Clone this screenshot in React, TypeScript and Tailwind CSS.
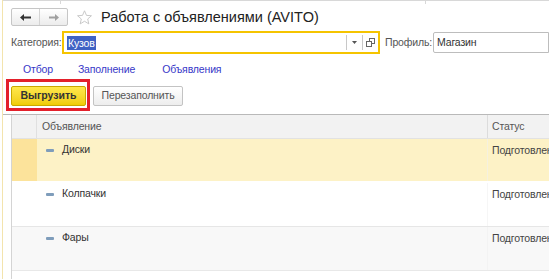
import React from "react";

const F = { fontFamily: '"Liberation Sans", Arial, sans-serif' };

function Dash() {
  return <span className="inline-block w-[8px] h-[3px] bg-[#7f9dbb] rounded-[1px] mr-[8px] mt-[1px]" />;
}

function Row({ name, bg, lead, border }: { name: string; bg: string; lead: string; border: string }) {
  return (
    <div className={`flex h-[44px] ${bg} ${border}`}>
      <div className={`w-[25px] shrink-0 ${lead}`} />
      <div className="flex-1 flex items-start pt-[4px] pl-[9px] text-[10.5px] tracking-[-0.15px] text-[#333]">
        <div className="flex items-center h-[14px]">
          <Dash />
          <span>{name}</span>
        </div>
      </div>
      <div className="w-[62px] shrink-0 border-l border-[#f0f0f0]/60 pl-[4px] pt-[4px] text-[10.5px] tracking-[-0.15px] text-[#444] whitespace-nowrap overflow-hidden">
        <div className="h-[14px] leading-[14px]">Подготовлен</div>
      </div>
    </div>
  );
}

export default function App() {
  return (
    <div className="w-[549px] h-[279px] overflow-hidden bg-white flex" style={F}>
      <div className="w-[2px] shrink-0" />
      <div className="w-[1px] shrink-0 bg-[#f3e4ad]" />
      <div className="flex-1 flex flex-col min-w-0">
        {/* top strip */}
        <div className="h-[4px] border-t border-[#d8d8d8] flex">
          <div className="w-[57px]" />
          <div className="w-[1px] h-[3px] bg-[#d8d8d8]" />
          <div className="w-[364px]" />
          <div className="w-[1px] h-[3px] bg-[#d8d8d8]" />
        </div>
        {/* title row */}
        <div className="flex items-center h-[18px] mt-[4px] pl-[8px]">
          <div className="flex h-[18px] w-[57px] border border-[#c6c6c6] rounded-[2px] bg-gradient-to-b from-white to-[#ececec]">
            <div className="flex-1 flex items-center justify-center border-r border-[#d4d4d4]">
              <svg width="13" height="9" viewBox="0 0 13 9">
                <path d="M1 4.5 L5 1 V3.5 H12 V5.5 H5 V8 Z" fill="#333" />
              </svg>
            </div>
            <div className="flex-1 flex items-center justify-center">
              <svg width="12" height="9" viewBox="0 0 12 9">
                <path d="M11 4.5 L7 1 V3.5 H1 V5.5 H7 V8 Z" fill="#a0a0a0" />
              </svg>
            </div>
          </div>
          <svg className="ml-[8px]" width="17" height="17" viewBox="0 0 24 24">
            <path
              d="M12 2.5 L14.8 9 L21.8 9.5 L16.5 14.1 L18.1 21 L12 17.3 L5.9 21 L7.5 14.1 L2.2 9.5 L9.2 9 Z"
              fill="none"
              stroke="#c4c4c4"
              strokeWidth="1.3"
              strokeLinejoin="round"
            />
          </svg>
          <div className="ml-[8px] text-[14.5px] text-[#222] leading-none whitespace-nowrap">
            Работа с объявлениями (AVITO)
          </div>
        </div>
        {/* category row */}
        <div className="flex items-center h-[23px] mt-[5px] pl-[8px] text-[10.5px] tracking-[-0.15px]">
          <span className="text-[#555] w-[51px] whitespace-nowrap">Категория:</span>
          <div className="flex items-center w-[318px] h-[23px] border-2 border-[#f5c400] bg-white">
            <div className="flex-1 pl-[3px] flex items-center">
              <span className="bg-[#3f62c4] text-white leading-[14px] px-[1px]">Кузов</span>
            </div>
            <div className="w-[16px] h-[15px] border-l border-[#c8c8c8] flex items-center justify-center">
              <svg width="5" height="3" viewBox="0 0 5 3"><path d="M0 0 H5 L2.5 3 Z" fill="#555" /></svg>
            </div>
            <div className="w-[16px] h-[15px] border-l border-[#c8c8c8] flex items-center justify-center">
              <svg width="9" height="9" viewBox="0 0 9 9">
                <rect x="3.5" y="0.5" width="5" height="5" fill="none" stroke="#666" />
                <rect x="0.5" y="3.5" width="5" height="5" fill="white" stroke="#666" />
              </svg>
            </div>
          </div>
          <span className="ml-[5px] text-[#555] w-[48px] whitespace-nowrap">Профиль:</span>
          <div className="flex-1 h-[21px] border border-[#bdbdbd] rounded-l-[2px] flex items-center pl-[3px] text-[#333]">
            Магазин
          </div>
        </div>
        {/* links */}
        <div className="flex items-center h-[14px] mt-[9px] pl-[20px] text-[10.5px] tracking-[-0.15px] text-[#3737c8]">
          <span>Отбор</span>
          <span className="ml-[25px]">Заполнение</span>
          <span className="ml-[27px]">Объявления</span>
        </div>
        {/* buttons */}
        <div className="flex items-center mt-[1px] pl-[3px] h-[33px]">
          <div className="border-[3px] border-[#e3202b] pt-[4px] pb-[2px] pl-[2px] pr-[1px] flex">
            <div className="w-[75px] h-[20px] rounded-[2px] border border-[#c9a800] bg-gradient-to-b from-[#ffe84a] to-[#f0cc00] flex items-center justify-center text-[10.5px] font-bold text-[#333]">
              Выгрузить
            </div>
          </div>
          <div className="ml-[3px] mt-[2px] w-[90px] h-[20px] rounded-[2px] border border-[#c3c3c3] bg-gradient-to-b from-white to-[#ededed] flex items-center justify-center text-[10.5px] tracking-[-0.15px] text-[#555]">
            Перезаполнить
          </div>
        </div>
        {/* table */}
        <div className="mt-[3px] border-t border-[#b9b9b9] flex-1 flex flex-col">
          <div className="ml-[8px] border-l border-[#d4d4d4] flex-1 flex flex-col">
            <div className="flex h-[24px] bg-[#f2f2f2] border-b border-[#e2e2e2] text-[10.5px] tracking-[-0.15px] text-[#555]">
              <div className="w-[25px] shrink-0 border-r border-[#e0e0e0]" />
              <div className="flex-1 flex items-center pl-[5px]">Объявление</div>
              <div className="w-[62px] shrink-0 border-l border-[#dcdcdc] flex items-center pl-[4px]">Статус</div>
            </div>
            <Row name="Диски" bg="bg-[#fdf2c6]" lead="bg-[#fce39b]" border="border-b-2 border-white" />
            <Row name="Колпачки" bg="bg-white" lead="bg-white" border="border-b border-[#e6e6e6]" />
            <Row name="Фары" bg="bg-[#f8f8f8]" lead="bg-[#f8f8f8]" border="border-b border-[#e8e8e8]" />
          </div>
        </div>
      </div>
    </div>
  );
}
